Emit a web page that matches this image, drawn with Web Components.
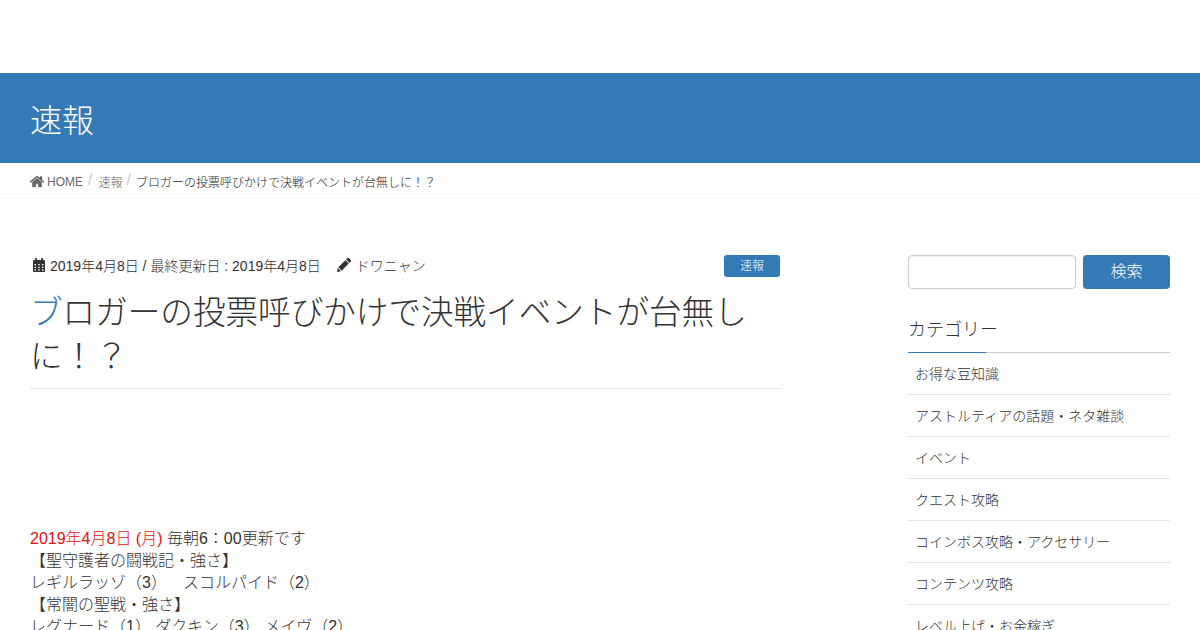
<!DOCTYPE html>
<html lang="ja">
<head>
<meta charset="utf-8">
<title>速報</title>
<style>
html, body { margin: 0; height: 630px; overflow: hidden; background: #fff; }
body { font-family: "Liberation Sans", "Noto Sans CJK JP", sans-serif; font-weight: 300; color: #333; font-size: 16px; text-spacing-trim: space-all; }
</style>
</head>
<body>
<site-page></site-page>

<script>
function doCustoms(){
    const homeIcon = `<svg width="14" height="12" viewBox="0 0 14 12"><path fill="currentColor" stroke="currentColor" stroke-width=".35" d="M7 2.400 2.300 6.300v4.200c0 .3.2.5.5.5h3V7.800h2.400V11h3c.3 0 .5-.2.5-.5V6.300zM13.900 5.600 12 4V.8c0-.2-.1-.3-.3-.3h-1.400c-.2 0-.3.1-.3.3v1.500L8 .5C7.400 0 6.600 0 6 .5L.1 5.600c-.1.1-.1.300 0 .4l.5.500c.1.100.3.100.4 0L7 1.500l6 5c.1.100.3.100.4 0l.5-.500c.1-.1.1-.300 0-.400z"/></svg>`;
    const calIcon = `<svg width="12" height="14" viewBox="0 0 12 14"><path fill="currentColor" fill-rule="evenodd" d="M2.500 0h1c.2 0 .4.200.4.400V2h4.200V.4c0-.2.2-.4.400-.4h1c.2 0 .4.200.4.400V2h1.100c.5 0 1 .5 1 1v10c0 .5-.5 1-1 1H1c-.5 0-1-.5-1-1V3c0-.5.500-1 1-1h1.100V.4c0-.2.2-.4.400-.4zM1.500 6v1.200h1.500V6zM5.250 6v1.200h1.500V6zM9 6v1.200h1.500V6zM1.500 8.700v1.200h1.500V8.700zM5.250 8.700v1.200h1.500V8.700zM9 8.700v1.200h1.500V8.700zM1.500 11.300v1.200h1.500v-1.200zM5.250 11.300v1.200h1.500v-1.200zM9 11.300v1.200h1.500v-1.200z"/></svg>`;
    const pencilIcon = `<svg width="14" height="14" viewBox="0 0 14 14"><path fill="currentColor" d="M4 13.200.3 13.950c-.2 0-.3-.1-.3-.3L.8 10zM1.300 9.300 8.400 2.200 11.800 5.600 4.700 12.700zM9.100 1.500 10.400.3c.5-.5 1.200-.5 1.700 0l1.600 1.600c.5.500.5 1.200 0 1.700l-1.200 1.300z"/></svg>`;

    class SiteBanner extends HTMLElement {
        constructor(){
            super();
            const shadow = this.attachShadow({mode: 'open'});
            shadow.innerHTML = `
                <style>
                    :host { display: block; background: #337ab7; color: #fff; height: 90px; margin-top: 73px; padding: 0 30px; box-sizing: border-box; }
                    div { font-size: 32px; line-height: 96px; }
                </style>
                <div><slot></slot></div>
            `;
        }
    }
    customElements.define('site-banner', SiteBanner);

    class BreadCrumb extends HTMLElement {
        constructor(){
            super();
            const shadow = this.attachShadow({mode: 'open'});
            shadow.innerHTML = `
                <style>
                    :host { display: flex; align-items: center; height: 36px; box-sizing: border-box; padding: 2px 30px 0; border-bottom: 1px solid #f5f5f5; font-size: 12px; color: #666; }
                    svg { margin-right: 3px; }
                    .sep { color: #ccc; font-size: 16px; margin: 0 5px; position: relative; top: -2px; }
                    .first { margin-right: 6px; }
                    .second { margin-left: 4px; }
                    .now { color: #222; }
                </style>
                ${homeIcon}<span>HOME</span><span class="sep first">/</span><span>速報</span><span class="sep second">/</span><span class="now">ブロガーの投票呼びかけで決戦イベントが台無しに！？</span>
            `;
        }
    }
    customElements.define('bread-crumb', BreadCrumb);

    class EntryMeta extends HTMLElement {
        constructor(){
            super();
            const shadow = this.attachShadow({mode: 'open'});
            shadow.innerHTML = `
                <style>
                    :host { display: flex; align-items: center; height: 22px; font-size: 14px; color: #333; }
                    .t { position: relative; top: -1px; }
                    .i { display: inline-flex; margin: 0 5px 0 3px; position: relative; top: -1px; }
                    .author { margin-left: 16px; }
                    .tag { margin-left: auto; box-sizing: border-box; background: #337ab7; color: #fff; font-size: 12px; width: 56px; height: 22px; line-height: 23px; text-align: center; border-radius: 3px; }
                </style>
                <span class="i">${calIcon}</span><span class="t">2019年4月8日 / 最終更新日 : 2019年4月8日</span>
                <span class="i author">${pencilIcon}</span><span class="t">ドワニャン</span>
                <span class="tag">速報</span>
            `;
        }
    }
    customElements.define('entry-meta', EntryMeta);

    class EntryTitle extends HTMLElement {
        constructor(){
            super();
            const shadow = this.attachShadow({mode: 'open'});
            shadow.innerHTML = `
                <style>
                    :host { display: block; margin-top: 14px; padding-bottom: 9px; border-bottom: 1px solid #e5e5e5; font-size: 32.6px; line-height: 44px; color: #333; }
                    div::first-letter { color: #337ab7; }
                </style>
                <div>ブロガーの投票呼びかけで決戦イベントが台無しに！？</div>
            `;
        }
    }
    customElements.define('entry-title', EntryTitle);

    class EntryBody extends HTMLElement {
        constructor(){
            super();
            const shadow = this.attachShadow({mode: 'open'});
            shadow.innerHTML = `
                <style>
                    :host { display: block; margin-top: 139px; font-size: 16px; line-height: 22px; color: #333; }
                    .red { color: #e60f0f; }
                </style>
                <span class="red">2019年4月8日 (月)</span> 毎朝6：00更新です<br>
                【聖守護者の闘戦記・強さ】<br>
                レギルラッゾ（3）　スコルパイド（2）<br>
                【常闇の聖戦・強さ】<br>
                レグナード（1） ダクキン（3） メイヴ（2）
            `;
        }
    }
    customElements.define('entry-body', EntryBody);

    class SearchBox extends HTMLElement {
        constructor(){
            super();
            const shadow = this.attachShadow({mode: 'open'});
            shadow.innerHTML = `
                <style>
                    :host { display: flex; gap: 7px; height: 34px; }
                    input { flex: 1; min-width: 0; box-sizing: border-box; height: 34px; border: 1px solid #ccc; border-radius: 4px; background: #fff; margin: 0; padding: 0 8px; box-shadow: inset 0 1px 1px rgba(0,0,0,.075); }
                    button { box-sizing: border-box; width: 87px; height: 34px; border: 0; border-radius: 4px; background: #337ab7; color: #fff; font: inherit; font-size: 16px; line-height: 34px; padding: 0; margin: 0; }
                </style>
                <input type="text" aria-label="検索"><button type="button">検索</button>
            `;
        }
    }
    customElements.define('search-box', SearchBox);

    class CategoryList extends HTMLElement {
        constructor(){
            super();
            const shadow = this.attachShadow({mode: 'open'});
            shadow.innerHTML = `
                <style>
                    :host { display: block; margin-top: 24px; }
                    h3 { position: relative; margin: 0; height: 39px; font-size: 18px; font-weight: 300; line-height: 34px; color: #333; border-bottom: 1px solid #ccc; }
                    h3::after { content: ""; position: absolute; left: 0; bottom: -1px; width: 78px; height: 1px; background: #337ab7; }
                    ::slotted(*) { display: block; height: 42px; box-sizing: border-box; padding: 0 7px; line-height: 43px; font-size: 14px; color: #333; border-bottom: 1px solid #e5e5e5; white-space: nowrap; }
                </style>
                <h3>カテゴリー</h3>
                <slot></slot>
            `;
        }
    }
    customElements.define('category-list', CategoryList);

    class SitePage extends HTMLElement {
        constructor(){
            super();
            const shadow = this.attachShadow({mode: 'open'});
            shadow.innerHTML = `
                <style>
                    :host { display: block; }
                    .wrap { display: flex; justify-content: space-between; padding: 56px 30px 0; }
                    main { width: 750px; }
                    aside { width: 262px; }
                </style>
                <site-banner>速報</site-banner>
                <bread-crumb></bread-crumb>
                <div class="wrap">
                    <main>
                        <entry-meta></entry-meta>
                        <entry-title></entry-title>
                        <entry-body></entry-body>
                    </main>
                    <aside>
                        <search-box></search-box>
                        <category-list>
                            <div>お得な豆知識</div>
                            <div>アストルティアの話題・ネタ雑談</div>
                            <div>イベント</div>
                            <div>クエスト攻略</div>
                            <div>コインボス攻略・アクセサリー</div>
                            <div>コンテンツ攻略</div>
                            <div>レベル上げ・お金稼ぎ</div>
                        </category-list>
                    </aside>
                </div>
            `;
        }
    }
    customElements.define('site-page', SitePage);
}
doCustoms();
</script>
</body>
</html>
